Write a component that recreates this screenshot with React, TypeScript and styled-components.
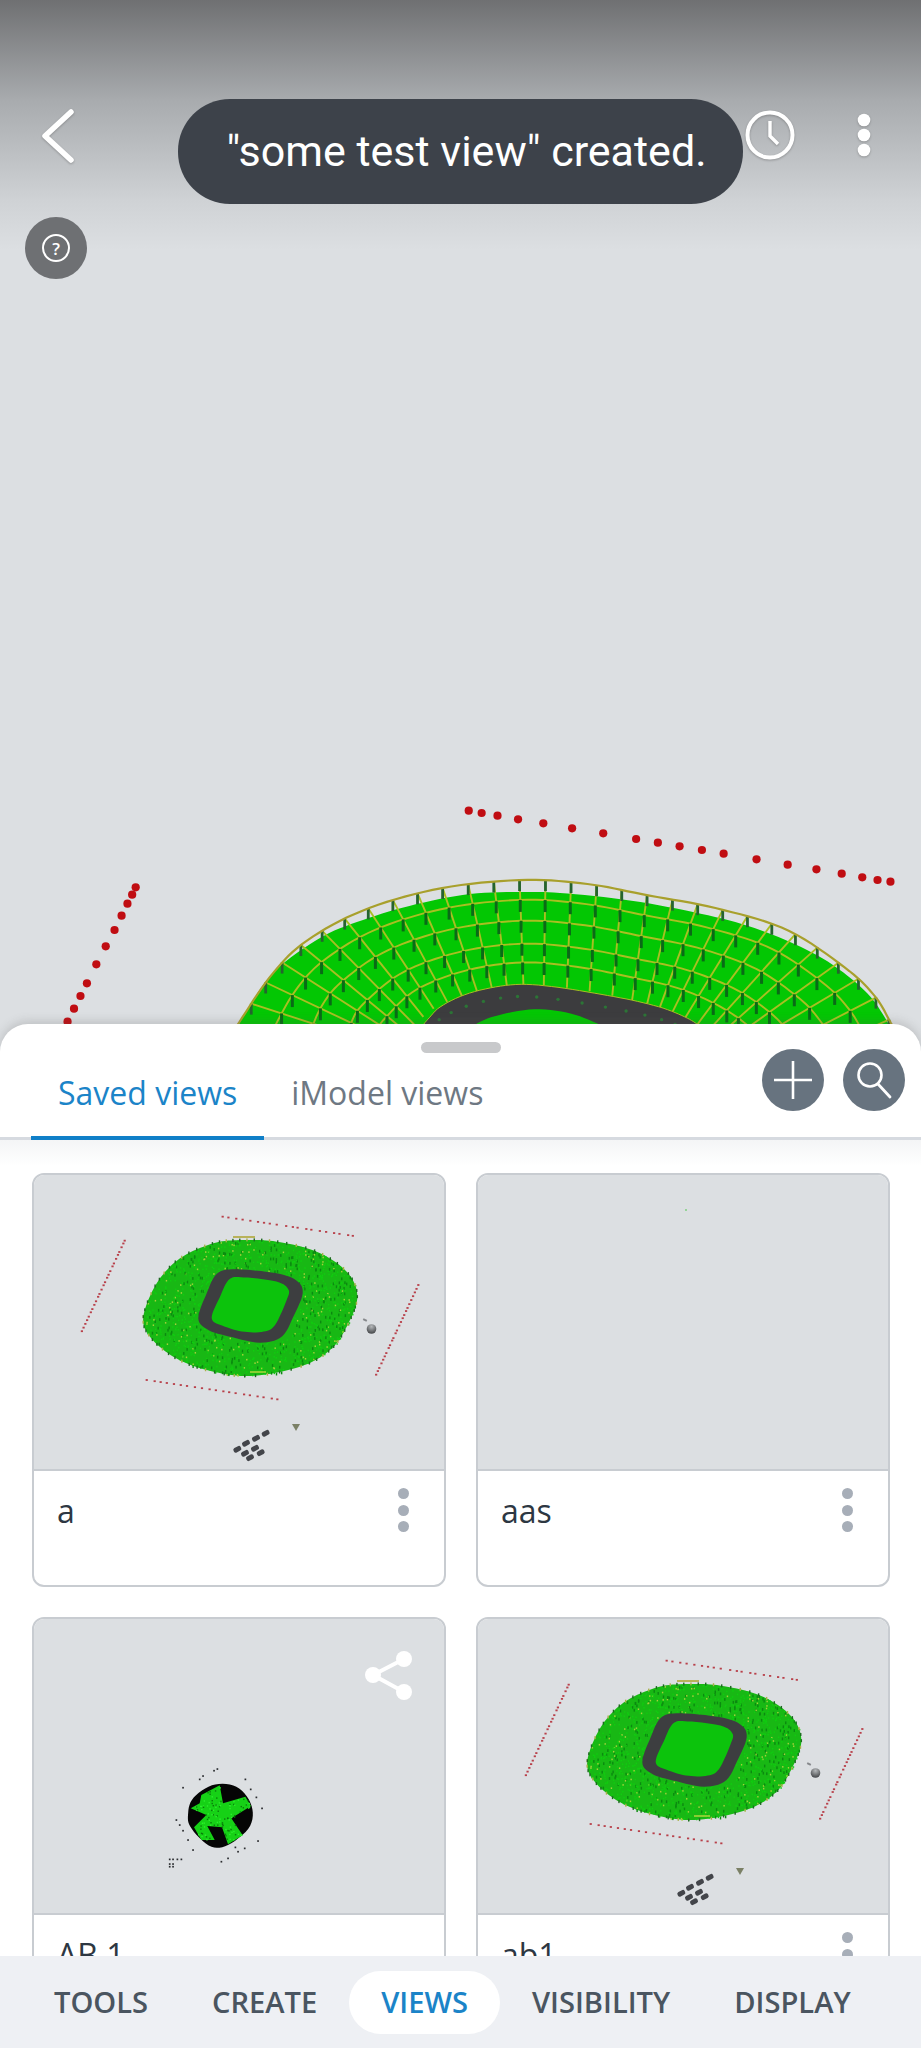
import React from "react";
import styled, { createGlobalStyle } from "styled-components";

type Pt = [number, number];

const GlobalStyle = createGlobalStyle`
  html, body {
    margin: 0;
    padding: 0;
    background: #dcdfe2;
  }
  * {
    box-sizing: border-box;
  }
`;

// seeded random so the speckles stay put between renders
const makeRandom = (seed: number) => {
  let s = seed;
  return () => {
    s = (s * 16807) % 2147483647;
    return (s - 1) / 2147483646;
  };
};

const curveAt = (pts: Pt[], u: number, closed = false): Pt => {
  const n = pts.length;
  const segs = closed ? n : n - 1;
  const f = Math.min(u, 0.99999) * segs;
  const i = Math.floor(f);
  const t = f - i;
  const at = (k: number) => (closed ? pts[(k + n) % n] : pts[Math.max(0, Math.min(n - 1, k))]);
  const [p0, p1, p2, p3] = [at(i - 1), at(i), at(i + 1), at(i + 2)];
  const calc = (a: number, b: number, c: number, d: number) =>
    0.5 * (2 * b + (c - a) * t + (2 * a - 5 * b + 4 * c - d) * t * t + (3 * b - a - 3 * c + d) * t * t * t);
  return [calc(p0[0], p1[0], p2[0], p3[0]), calc(p0[1], p1[1], p2[1], p3[1])];
};

const sample = (pts: Pt[], count: number, closed = false): Pt[] =>
  Array.from({ length: count + 1 }, (_, i) => curveAt(pts, i / count, closed));

const toPoints = (pts: Pt[]) => pts.map(([x, y]) => `${x.toFixed(1)},${y.toFixed(1)}`).join(" ");

const inside = (poly: Pt[], [x, y]: Pt) => {
  let hit = false;
  for (let i = 0, j = poly.length - 1; i < poly.length; j = i++) {
    const [xi, yi] = poly[i];
    const [xj, yj] = poly[j];
    if (yi > y !== yj > y && x < ((xj - xi) * (y - yi)) / (yj - yi) + xi) hit = !hit;
  }
  return hit;
};

/* ---------- big model in the viewport ---------- */

// read off a crop that is squeezed horizontally, hence the two scales
const vp = ([x, y]: Pt): Pt => [x / 1.7025, 780 + y / 3];

const topDots: Pt[] = ([
  [798, 92], [820, 99], [847, 107], [882, 118], [925, 130], [974, 145], [1027, 160], [1083, 177],
  [1120, 188], [1157, 199], [1195, 210], [1232, 221], [1288, 238], [1341, 254], [1390, 268],
  [1433, 281], [1468, 292], [1494, 300], [1516, 305],
] as Pt[]).map(vp);

const leftDots: Pt[] = ([
  [231, 322], [225, 344], [217, 371], [207, 407], [195, 450], [180, 499], [164, 553], [148, 610],
  [137, 648], [126, 686], [115, 725],
] as Pt[]).map(vp);

const rim: Pt[] = ([
  [380, 800], [405, 733], [460, 590], [520, 485], [620, 390], [750, 325], [890, 300], [1000, 312],
  [1100, 345], [1220, 385], [1340, 450], [1440, 565], [1490, 650], [1518, 733], [1540, 800],
] as Pt[]).map(vp);

// where each rim column ends up; the side ones run on under the sheet
const bowlFoot: Pt[] = ([
  [730, 1000], [710, 860], [690, 800], [700, 760], [735, 690], [810, 635], [895, 613], [990, 630],
  [1075, 660], [1140, 690], [1200, 745], [1240, 800], [1260, 860], [1280, 920], [1300, 1000],
] as Pt[]).map(vp);

const track: Pt[] = ([
  [690, 790], [715, 745], [730, 715], [750, 680], [790, 645], [840, 622], [890, 613], [950, 622],
  [1020, 642], [1080, 662], [1130, 685], [1165, 710], [1185, 730], [1200, 750], [1220, 800],
] as Pt[]).map(vp);

const field: Pt[] = ([
  [770, 790], [810, 733], [850, 705], [910, 688], [970, 700], [1020, 733], [1090, 790],
] as Pt[]).map(vp);

const greenEdge: Pt[] = [
  [232, 1040], [240, 1022], [273, 973], [320, 938], [363, 920], [413, 905], [470, 894], [523, 892],
  [560, 893], [627, 900], [693, 912], [745, 925], [790, 942], [830, 963], [867, 993], [888, 1023], [894, 1040],
];

const bowlPoint = (s: number, t: number): Pt => {
  const a = curveAt(rim, s);
  const b = curveAt(bowlFoot, s);
  return [a[0] + (b[0] - a[0]) * t, a[1] + (b[1] - a[1]) * t];
};

const ringLine = (t: number) => Array.from({ length: 121 }, (_, i) => bowlPoint(i / 120, t));
const bowlRings = [0.19, 0.39, 0.61, 0.79];

// walk along the rim so the columns are evenly spaced
const bowlRadials = (() => {
  const out: number[] = [];
  let last = curveAt(rim, 0);
  let run = 0;
  for (let i = 1; i <= 2000; i++) {
    const s = i / 2000;
    const p = curveAt(rim, s);
    run += Math.hypot(p[0] - last[0], p[1] - last[1]);
    last = p;
    if (run >= 25.5) {
      out.push(s);
      run = 0;
    }
  }
  return out;
})();

const ModelScene: React.FC = () => (
  <Scene viewBox="0 0 921 1024">
    <polygon points={toPoints(sample(greenEdge, 120))} fill="#03c703" />
    {bowlRings.map((t) => (
      <polyline key={t} points={toPoints(ringLine(t))} fill="none" stroke="#a9bf22" strokeWidth={1.9} />
    ))}
    {bowlRadials.map((s) => (
      <polyline
        key={s}
        points={toPoints([bowlPoint(s, 0), bowlPoint(s, 1)])}
        fill="none"
        stroke="#a9bf22"
        strokeWidth={1.9}
      />
    ))}
    {bowlRadials.map((s) =>
      bowlRings.map((t) => {
        const [x, y] = bowlPoint(s, t);
        return <line key={`${s}-${t}`} x1={x} y1={y} x2={x} y2={y + 12} stroke="#0a6a17" strokeWidth={3} />;
      })
    )}
    <polygon points={toPoints(sample(track, 80))} fill="#3c3c3e" stroke="#a9bf22" strokeWidth={1} />
    <polygon points={toPoints(sample(field, 40))} fill="#03c703" />
    {sample(track, 24).map(([x, y], i) => (
      <circle key={i} cx={x} cy={y + 12} r={1.7} fill="#2c7436" />
    ))}
    {bowlRadials.map((s) => {
      const [x, y] = bowlPoint(s, 0);
      return <line key={`r${s}`} x1={x} y1={y} x2={x} y2={y + 11} stroke="#25642f" strokeWidth={2.8} />;
    })}
    <polyline points={toPoints(ringLine(0))} fill="none" stroke="#a8a02c" strokeWidth={2.2} />
    {[...topDots, ...leftDots].map(([x, y]) => (
      <circle key={`${x}-${y}`} cx={x} cy={y} r={4.1} fill="#c00d12" />
    ))}
  </Scene>
);

/* ---------- thumbnails ---------- */

const th = ([x, y]: Pt): Pt => [(x - 102) / 3, (y - 45) / 3];
// same thumbnail, measured on the closer crop
const thClose = ([x, y]: Pt): Pt => [96 + x / 3, 15 + y / 3];

const blob: Pt[] = ([
  [430, 470], [470, 370], [540, 295], [640, 250], [730, 240], [830, 245], [950, 275], [1040, 335],
  [1072, 410], [1040, 500], [990, 570], [900, 620], [750, 648], [620, 630], [520, 590], [450, 530],
] as Pt[]).map(th);

const thumbTrack: Pt[] = ([
  [205, 385], [230, 310], [262, 250], [320, 238], [440, 250], [500, 272], [518, 310], [490, 380],
  [455, 440], [390, 458], [300, 440], [235, 420],
] as Pt[]).map(thClose);

const thumbField: Pt[] = ([
  [245, 385], [270, 320], [298, 268], [340, 262], [440, 275], [475, 298], [470, 330], [435, 405],
  [400, 425], [340, 425], [280, 408],
] as Pt[]).map(thClose);

const redLines: { a: Pt; b: Pt; n: number }[] = [
  { a: [668, 170], b: [1062, 228], n: 20 },
  { a: [375, 240], b: [245, 515], n: 25 },
  { a: [1255, 375], b: [1128, 645], n: 25 },
  { a: [440, 660], b: [832, 718], n: 20 },
];

const cluster: Pt[] = ([
  [797, 820], [768, 835], [738, 850], [712, 868], [765, 865], [782, 878], [735, 880], [750, 893],
] as Pt[]).map(th);

const blobOutline = sample(blob, 160, true);
const trackOutline = sample(thumbTrack, 80, true);

const speckles = (() => {
  const rnd = makeRandom(4711);
  const out: { x: number; y: number; c: string; h: number }[] = [];
  while (out.length < 1300) {
    const p: Pt = [105 + rnd() * 225, 60 + rnd() * 145];
    if (!inside(blobOutline, p) || inside(trackOutline, p)) continue;
    const roll = rnd();
    out.push({
      x: p[0],
      y: p[1],
      c: roll < 0.22 ? "#0b8a10" : roll < 0.36 ? "#a5d13a" : "#10cc10",
      h: roll < 0.22 ? 2.8 : 1.6,
    });
  }
  return out;
})();

const edgeTicks = sample(blob, 70, true);

const redDashes = (() => {
  const rnd = makeRandom(31);
  return redLines.flatMap(({ a, b, n }) =>
    Array.from({ length: n }, (_, i) => {
      const k = Math.min(1, Math.max(0, (i + (rnd() - 0.5) * 0.4) / (n - 1)));
      return th([a[0] + (b[0] - a[0]) * k, a[1] + (b[1] - a[1]) * k]);
    })
  );
})();

const StadiumThumb: React.FC = () => (
  <ThumbArt viewBox="0 0 410 296">
    <defs>
      <radialGradient id="ballFill" cx="50%" cy="25%" r="70%">
        <stop offset="0%" stopColor="#b5b8ba" />
        <stop offset="100%" stopColor="#4a4c4f" />
      </radialGradient>
    </defs>
    <polygon points={toPoints(blobOutline)} fill="#18b814" />
    {speckles.map((d, i) => (
      <rect key={i} x={d.x} y={d.y} width={1.4} height={d.h} fill={d.c} />
    ))}
    {edgeTicks.map(([x, y], i) => (
      <rect key={i} x={x - 0.7} y={y - 1.5} width={1.4} height={3} fill={i % 3 ? "#1d6b20" : "#a9b04a"} />
    ))}
    <polygon points={toPoints(trackOutline)} fill="#3d3e40" />
    <polygon points={toPoints(sample(thumbField, 80, true))} fill="#0cc30c" />
    <line x1={199} y1={62} x2={221} y2={62} stroke="#b8b25a" strokeWidth={2} />
    <line x1={216} y1={197} x2={232} y2={197} stroke="#a6d43a" strokeWidth={1.6} />
    {redDashes.map(([x, y], i) => (
      <rect key={i} x={x - 1.1} y={y - 0.9} width={2.2} height={1.8} fill="#b8404a" />
    ))}
    {cluster.map(([x, y], i) => (
      <rect
        key={i}
        x={x - 4}
        y={y - 2.5}
        width={8}
        height={5}
        rx={2}
        fill="#43454a"
        transform={`rotate(-28 ${x} ${y})`}
      />
    ))}
    <circle cx={337.5} cy={154} r={4.8} fill="url(#ballFill)" />
    <rect x={329} y={144} width={4} height={2} fill="#85888b" transform="rotate(25 331 145)" />
    <polygon points="258,249 266,249 262,256" fill="#7b8066" />
  </ThumbArt>
);

const c3 = ([x, y]: Pt): Pt => [114 + x / 3, 121 + y / 3];

const tinyBlob: Pt[] = ([
  [120, 225], [135, 175], [195, 135], [265, 140], [310, 195], [305, 260], [240, 315], [185, 318], [130, 265],
] as Pt[]).map(c3);

const tinyStar: Pt[] = ([
  [160, 165], [215, 136], [225, 190], [292, 170], [309, 198], [250, 235], [284, 286], [240, 313],
  [222, 262], [178, 258], [200, 300], [160, 300], [138, 262], [175, 225], [128, 205], [155, 190],
] as Pt[]).map(c3);

const tinyBits: Pt[] = ([
  [155, 118], [165, 108], [198, 92], [208, 87], [105, 143], [292, 118], [308, 148], [325, 172], [342, 205],
  [85, 240], [95, 255], [105, 272], [120, 300], [135, 330], [330, 303], [290, 325], [270, 335], [240, 355],
  [220, 365], [262, 322], [65, 358], [75, 358], [88, 358], [100, 358], [65, 372], [75, 372], [65, 380], [75, 380],
] as Pt[]).map(c3);

const tinyDots = (() => {
  const rnd = makeRandom(97);
  const out: Pt[] = [];
  while (out.length < 110) {
    const p: Pt = [153 + rnd() * 70, 160 + rnd() * 70];
    if (inside(tinyStar, p)) out.push(p);
  }
  return out;
})();

const TinyThumb: React.FC = () => (
  <ThumbArt viewBox="0 0 410 296">
    <polygon points={toPoints(sample(tinyBlob, 60, true))} fill="#050505" />
    <polygon points={toPoints(tinyStar)} fill="#16d116" />
    {tinyDots.map(([x, y], i) => (
      <rect key={i} x={x} y={y} width={1.4} height={1.4} fill={i % 2 ? "#0a7a0a" : "#2cf02c"} />
    ))}
    {tinyBits.map(([x, y], i) => (
      <rect key={i} x={x - 0.8} y={y - 0.8} width={1.7} height={1.7} fill="#2b2d30" />
    ))}
  </ThumbArt>
);

const SpeckThumb: React.FC = () => (
  <ThumbArt viewBox="0 0 410 296">
    <circle cx={208} cy={35} r={1} fill="#7fd07f" />
  </ThumbArt>
);

/* ---------- layout ---------- */

const Page = styled.div`
  width: 921px;
  height: 2048px;
  overflow: hidden;
  display: flex;
  flex-direction: column;
  font-family: "Open Sans", "Liberation Sans", sans-serif;
`;

const Viewport = styled.div`
  position: relative;
  height: 1024px;
  flex: none;
  padding-top: 110px;
  background: linear-gradient(180deg, #6f7072 0, #a8abae 100px, #cfd2d5 200px, #dcdfe2 250px);
`;

const Scene = styled.svg`
  position: absolute;
  inset: 0;
  width: 921px;
  height: 1024px;
`;

const TopBar = styled.div`
  position: relative;
  display: flex;
  align-items: center;
  height: 51px;
  padding: 0 0 0 40px;
`;

const GlyphIcon = styled.svg`
  display: block;
  flex: none;
  filter: drop-shadow(0 1px 1px rgba(60, 60, 60, 0.35));
`;

const TopActions = styled.div`
  display: flex;
  align-items: center;
  margin-left: auto;
  margin-top: -2px;
  padding-right: 50px;
  gap: 62px;
`;

const Toast = styled.div`
  position: absolute;
  top: 99px;
  left: 178px;
  width: 565px;
  height: 105px;
  padding-left: 12px;
  border-radius: 52px;
  background: #3d424a;
  color: #fff;
  font-family: Roboto, "Liberation Sans", sans-serif;
  font-size: 43px;
  line-height: 105px;
  text-align: center;
  white-space: nowrap;
`;

const HelpButton = styled.button`
  position: relative;
  display: flex;
  align-items: center;
  justify-content: center;
  width: 62px;
  height: 62px;
  margin: 56px 0 0 25px;
  padding: 0;
  border: 0;
  border-radius: 50%;
  background: #6e7073;
`;

const HelpRing = styled.span`
  display: flex;
  align-items: center;
  justify-content: center;
  width: 28px;
  height: 28px;
  border: 2.4px solid #fff;
  border-radius: 50%;
  color: #fff;
  font-family: "Open Sans", sans-serif;
  font-size: 17px;
  font-weight: 600;
  line-height: 1;
`;

const Sheet = styled.section`
  position: relative;
  flex: 1;
  min-height: 0;
  display: flex;
  flex-direction: column;
  border-radius: 28px 28px 0 0;
  background: #fff;
  box-shadow: 0 -3px 10px rgba(90, 90, 90, 0.22);
  overflow: hidden;
`;

const DragHandle = styled.div`
  position: absolute;
  top: 18px;
  left: 421px;
  width: 80px;
  height: 11px;
  border-radius: 6px;
  background: #c8c9cb;
`;

const TabRow = styled.div`
  display: flex;
  flex: none;
  height: 116px;
  padding: 0 16px 0 31px;
  border-bottom: 3px solid #d6dae0;
`;

const Tab = styled.div<{ $active?: boolean }>`
  align-self: flex-end;
  height: 69px;
  margin-bottom: -3px;
  padding: 0 27px;
  border-bottom: 4px solid ${(p) => (p.$active ? "#0f7fc8" : "transparent")};
  color: ${(p) => (p.$active ? "#1b84c8" : "#6e7883")};
  font-size: 32px;
  line-height: 44px;
  white-space: nowrap;
`;

const SheetActions = styled.div`
  display: flex;
  gap: 19px;
  margin: 25px 0 0 auto;
`;

const RoundButton = styled.button`
  display: flex;
  align-items: center;
  justify-content: center;
  width: 62px;
  height: 62px;
  padding: 0;
  border: 0;
  border-radius: 50%;
  background: #67737f;
`;

const ScrollArea = styled.div`
  flex: 1;
  min-height: 0;
  overflow: hidden;
  background: linear-gradient(180deg, #f4f5f6 0, #fff 26px);
`;

const CardGrid = styled.div`
  display: grid;
  grid-template-columns: repeat(2, 414px);
  gap: 30px;
  padding: 33px 0 0 32px;
`;

const Card = styled.article`
  height: 414px;
  border: 2px solid #c8ccd1;
  border-radius: 12px;
  background: #fff;
  overflow: hidden;
`;

const Thumb = styled.div`
  position: relative;
  height: 296px;
  background: #dcdfe2;
  border-bottom: 2px solid #c8ccd1;
`;

const ThumbArt = styled.svg`
  display: block;
  width: 410px;
  height: 296px;
  filter: blur(0.6px);
`;

const ShareBadge = styled.svg`
  position: absolute;
  top: 30px;
  right: 31px;
  width: 48px;
  height: 52px;
`;

const CardBody = styled.div`
  display: flex;
  align-items: flex-start;
  justify-content: space-between;
  padding: 18px 35px 0 23px;
`;

const CardName = styled.div`
  color: #2d3742;
  font-size: 32px;
  line-height: 44px;
`;

const KebabDots = styled.div`
  display: flex;
  flex-direction: column;
  gap: 5.5px;
  margin-top: -1px;
`;

const KebabDot = styled.span`
  width: 11px;
  height: 11px;
  border-radius: 50%;
  background: #a7aeb8;
`;

const BottomNav = styled.nav`
  position: relative;
  display: flex;
  align-items: center;
  flex: none;
  height: 92px;
  padding: 0 22px;
  background: #eef0f4;
`;

const NavItem = styled.div<{ $active?: boolean }>`
  height: 63px;
  padding: 0 32px;
  border-radius: 32px;
  background: ${(p) => (p.$active ? "#fff" : "transparent")};
  color: ${(p) => (p.$active ? "#1b84c8" : "#4a5560")};
  font-size: 29.1px;
  font-weight: 600;
  line-height: 63px;
  white-space: nowrap;
`;

const views = [
  { name: "a", art: <StadiumThumb /> },
  { name: "aas", art: <SpeckThumb /> },
  { name: "AB 1", art: <TinyThumb />, shared: true },
  { name: "ab1", art: <StadiumThumb /> },
];

const navItems = ["TOOLS", "CREATE", "VIEWS", "VISIBILITY", "DISPLAY"];

const App: React.FC = () => (
  <Page>
    <GlobalStyle />
    <Viewport>
      <ModelScene />
      <TopBar>
        <GlyphIcon width="36" height="54" viewBox="0 0 36 54">
          <path d="M31 3 5 27l26 24" fill="none" stroke="#fff" strokeWidth="5.5" strokeLinecap="round" strokeLinejoin="round" />
        </GlyphIcon>
        <TopActions>
          <GlyphIcon width="50" height="50" viewBox="0 0 50 50">
            <circle cx="25" cy="25" r="22.5" fill="none" stroke="#fff" strokeWidth="4" />
            <path d="M25 11v15l8 8" fill="none" stroke="#fff" strokeWidth="3.4" />
          </GlyphIcon>
          <GlyphIcon width="14" height="44" viewBox="0 0 14 44">
            <circle cx="7" cy="7" r="6.3" fill="#fff" />
            <circle cx="7" cy="22" r="6.3" fill="#fff" />
            <circle cx="7" cy="37" r="6.3" fill="#fff" />
          </GlyphIcon>
        </TopActions>
      </TopBar>
      <Toast>"some test view" created.</Toast>
      <HelpButton>
        <HelpRing>?</HelpRing>
      </HelpButton>
    </Viewport>
    <Sheet>
      <DragHandle />
      <TabRow>
        <Tab $active>Saved views</Tab>
        <Tab>iModel views</Tab>
        <SheetActions>
          <RoundButton>
            <svg width="40" height="40" viewBox="0 0 40 40">
              <path d="M20 1v38M1 20h38" stroke="#fff" strokeWidth="2.6" />
            </svg>
          </RoundButton>
          <RoundButton>
            <svg width="40" height="40" viewBox="0 0 40 40">
              <circle cx="16" cy="15" r="11.5" fill="none" stroke="#fff" strokeWidth="2.6" />
              <path d="m24 24 12 13" stroke="#fff" strokeWidth="2.8" strokeLinecap="round" />
            </svg>
          </RoundButton>
        </SheetActions>
      </TabRow>
      <ScrollArea>
        <CardGrid>
          {views.map((view) => (
            <Card key={view.name}>
              <Thumb>
                {view.art}
                {view.shared && (
                  <ShareBadge viewBox="0 0 48 52">
                    <path d="M39 10 8 26l31 17" fill="none" stroke="#fff" strokeWidth="4" />
                    <circle cx="39" cy="10" r="8" fill="#fff" />
                    <circle cx="8" cy="26" r="8" fill="#fff" />
                    <circle cx="39" cy="43" r="8" fill="#fff" />
                  </ShareBadge>
                )}
              </Thumb>
              <CardBody>
                <CardName>{view.name}</CardName>
                {!view.shared && (
                  <KebabDots>
                    <KebabDot />
                    <KebabDot />
                    <KebabDot />
                  </KebabDots>
                )}
              </CardBody>
            </Card>
          ))}
        </CardGrid>
      </ScrollArea>
      <BottomNav>
        {navItems.map((item) => (
          <NavItem key={item} $active={item === "VIEWS"}>
            {item}
          </NavItem>
        ))}
      </BottomNav>
    </Sheet>
  </Page>
);

export default App;
